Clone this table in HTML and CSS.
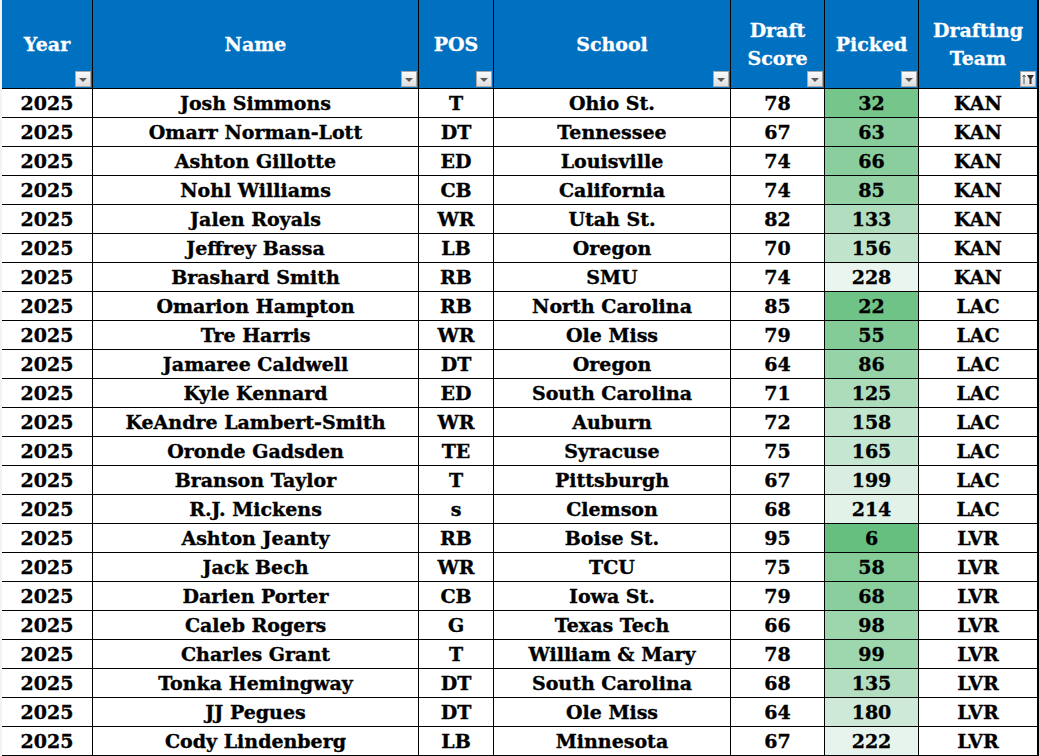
FILE: index.html
```html
<!DOCTYPE html>
<html>
<head>
<meta charset="utf-8">
<link rel="stylesheet" href="styles.css">
</head>
<body>
<div class="sheet">
  <div class="hd"><span>Year</span><i class="fb"></i></div>
  <div class="hd"><span>Name</span><i class="fb"></i></div>
  <div class="hd"><span>POS</span><i class="fb"></i></div>
  <div class="hd"><span>School</span><i class="fb"></i></div>
  <div class="hd"><span>Draft<br>Score</span><i class="fb"></i></div>
  <div class="hd"><span>Picked</span><i class="fb"></i></div>
  <div class="hd"><span>Drafting<br>Team</span><i class="fb sorted"><svg width="14" height="14" viewBox="0 0 14 14"><path d="M3 3 L3 12 M1.5 5 L3 3 L4.5 5" stroke="#555" stroke-width="1" fill="none"/><path d="M6 3 H13 L10.5 7 V12 H8.5 V7 Z" fill="#333"/></svg></i></div>

  <div class="c">2025</div><div class="c">Josh Simmons</div><div class="c">T</div><div class="c">Ohio St.</div><div class="c">78</div><div class="c" style="background:rgb(118,198,139)">32</div><div class="c">KAN</div>
  <div class="c">2025</div><div class="c">Omarr Norman-Lott</div><div class="c">DT</div><div class="c">Tennessee</div><div class="c">67</div><div class="c" style="background:rgb(136,205,155)">63</div><div class="c">KAN</div>
  <div class="c">2025</div><div class="c">Ashton Gillotte</div><div class="c">ED</div><div class="c">Louisville</div><div class="c">74</div><div class="c" style="background:rgb(138,206,157)">66</div><div class="c">KAN</div>
  <div class="c">2025</div><div class="c">Nohl Williams</div><div class="c">CB</div><div class="c">California</div><div class="c">74</div><div class="c" style="background:rgb(149,210,166)">85</div><div class="c">KAN</div>
  <div class="c">2025</div><div class="c">Jalen Royals</div><div class="c">WR</div><div class="c">Utah St.</div><div class="c">82</div><div class="c" style="background:rgb(178,222,191)">133</div><div class="c">KAN</div>
  <div class="c">2025</div><div class="c">Jeffrey Bassa</div><div class="c">LB</div><div class="c">Oregon</div><div class="c">70</div><div class="c" style="background:rgb(192,228,203)">156</div><div class="c">KAN</div>
  <div class="c">2025</div><div class="c">Brashard Smith</div><div class="c">RB</div><div class="c">SMU</div><div class="c">74</div><div class="c" style="background:rgb(235,245,240)">228</div><div class="c">KAN</div>
  <div class="c">2025</div><div class="c">Omarion Hampton</div><div class="c">RB</div><div class="c">North Carolina</div><div class="c">85</div><div class="c" style="background:rgb(112,195,134)">22</div><div class="c">LAC</div>
  <div class="c">2025</div><div class="c">Tre Harris</div><div class="c">WR</div><div class="c">Ole Miss</div><div class="c">79</div><div class="c" style="background:rgb(131,203,151)">55</div><div class="c">LAC</div>
  <div class="c">2025</div><div class="c">Jamaree Caldwell</div><div class="c">DT</div><div class="c">Oregon</div><div class="c">64</div><div class="c" style="background:rgb(150,211,167)">86</div><div class="c">LAC</div>
  <div class="c">2025</div><div class="c">Kyle Kennard</div><div class="c">ED</div><div class="c">South Carolina</div><div class="c">71</div><div class="c" style="background:rgb(173,220,187)">125</div><div class="c">LAC</div>
  <div class="c">2025</div><div class="c">KeAndre Lambert-Smith</div><div class="c">WR</div><div class="c">Auburn</div><div class="c">72</div><div class="c" style="background:rgb(193,228,204)">158</div><div class="c">LAC</div>
  <div class="c">2025</div><div class="c">Oronde Gadsden</div><div class="c">TE</div><div class="c">Syracuse</div><div class="c">75</div><div class="c" style="background:rgb(197,230,208)">165</div><div class="c">LAC</div>
  <div class="c">2025</div><div class="c">Branson Taylor</div><div class="c">T</div><div class="c">Pittsburgh</div><div class="c">67</div><div class="c" style="background:rgb(217,238,225)">199</div><div class="c">LAC</div>
  <div class="c">2025</div><div class="c">R.J. Mickens</div><div class="c">s</div><div class="c">Clemson</div><div class="c">68</div><div class="c" style="background:rgb(226,242,233)">214</div><div class="c">LAC</div>
  <div class="c">2025</div><div class="c">Ashton Jeanty</div><div class="c">RB</div><div class="c">Boise St.</div><div class="c">95</div><div class="c" style="background:rgb(102,191,126)">6</div><div class="c">LVR</div>
  <div class="c">2025</div><div class="c">Jack Bech</div><div class="c">WR</div><div class="c">TCU</div><div class="c">75</div><div class="c" style="background:rgb(133,204,152)">58</div><div class="c">LVR</div>
  <div class="c">2025</div><div class="c">Darien Porter</div><div class="c">CB</div><div class="c">Iowa St.</div><div class="c">79</div><div class="c" style="background:rgb(139,206,158)">68</div><div class="c">LVR</div>
  <div class="c">2025</div><div class="c">Caleb Rogers</div><div class="c">G</div><div class="c">Texas Tech</div><div class="c">66</div><div class="c" style="background:rgb(157,213,173)">98</div><div class="c">LVR</div>
  <div class="c">2025</div><div class="c">Charles Grant</div><div class="c">T</div><div class="c">William &amp; Mary</div><div class="c">78</div><div class="c" style="background:rgb(158,214,174)">99</div><div class="c">LVR</div>
  <div class="c">2025</div><div class="c">Tonka Hemingway</div><div class="c">DT</div><div class="c">South Carolina</div><div class="c">68</div><div class="c" style="background:rgb(179,222,192)">135</div><div class="c">LVR</div>
  <div class="c">2025</div><div class="c">JJ Pegues</div><div class="c">DT</div><div class="c">Ole Miss</div><div class="c">64</div><div class="c" style="background:rgb(206,233,215)">180</div><div class="c">LVR</div>
  <div class="c">2025</div><div class="c">Cody Lindenberg</div><div class="c">LB</div><div class="c">Minnesota</div><div class="c">67</div><div class="c" style="background:rgb(231,244,237)">222</div><div class="c">LVR</div>
</div>
</body>
</html>
```
FILE: styles.css
```css
html, body {
  margin: 0;
  padding: 0;
  background: #ffffff;
}
body {
  width: 1039px;
  height: 756px;
  overflow: hidden;
  background: #f3f3f3;
  font-family: "DejaVu Serif", "Liberation Serif", serif;
}
.sheet {
  margin-left: 2px;
  width: 1036px;
  display: grid;
  grid-template-columns: 90px 325px 74px 236px 93px 93px 118px;
  grid-template-rows: 88px repeat(23, 28px);
  column-gap: 1px;
  row-gap: 1px;
  background: #000;
  padding: 0 1px 1px 0;
}
.hd {
  position: relative;
  background: #0070c0;
  color: #fff;
  font-weight: bold;
  font-size: 19px;
  line-height: 28px;
  -webkit-text-stroke: 0.3px #fff;
  display: flex;
  align-items: center;
  justify-content: center;
  text-align: center;
}
.hd span {
  display: block;
}
.fb {
  position: absolute;
  right: 1px;
  bottom: 1px;
  width: 14px;
  height: 14px;
  border: 1px solid #a9a9a9;
  background: linear-gradient(#fbfbfb, #dedede);
  display: flex;
  align-items: center;
  justify-content: center;
  -webkit-text-stroke: 0;
}
.fb::after {
  content: "";
  border-left: 4px solid transparent;
  border-right: 4px solid transparent;
  border-top: 4px solid #595959;
  margin-top: 1px;
}
.fb.sorted::after {
  display: none;
}
.c {
  background: #fff;
  color: #000;
  font-weight: bold;
  font-size: 19px;
  -webkit-text-stroke: 0.35px #000;
  display: flex;
  align-items: center;
  justify-content: center;
  white-space: nowrap;
}
```
